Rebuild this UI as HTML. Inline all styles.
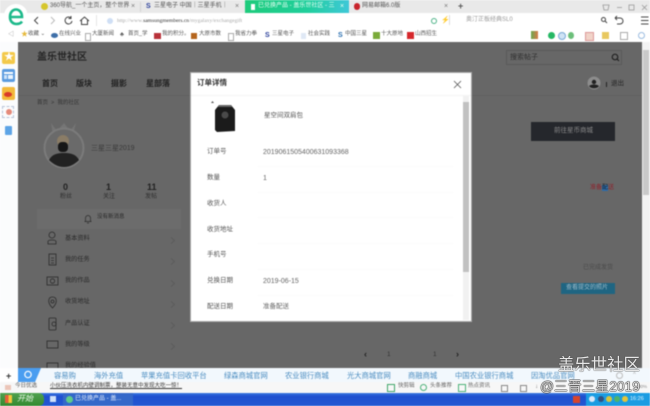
<!DOCTYPE html>
<html><head><meta charset="utf-8">
<style>
html,body{margin:0;padding:0;width:650px;height:406px;overflow:hidden;background:#fff}
body{font-family:"Liberation Sans","Noto Sans CJK SC",sans-serif}
#w{position:absolute;left:0;top:0;width:650px;height:406px;overflow:hidden;filter:blur(.4px)}
.a{position:absolute;white-space:nowrap;line-height:1}
.b{position:absolute}
.dk{color:#222}
.row{position:absolute;left:65px;font-size:6.200px;color:#2a2a2a;line-height:1;white-space:nowrap}
.arr{position:absolute;left:169px;width:4px;height:4px;border-top:1px solid #5c5c5c;border-right:1px solid #5c5c5c;transform:rotate(45deg)}
.ml{position:absolute;left:207px;font-size:6.500px;color:#555;line-height:1;white-space:nowrap}
.mv{position:absolute;left:263px;font-size:6.500px;color:#666;line-height:1;white-space:nowrap}
.ln{position:absolute;left:258px;width:195px;height:1px;background:#fbfbfb}
.lk{position:absolute;top:371.500px;font-size:7.300px;color:#4a8cc0;line-height:1;white-space:nowrap}
.bm{position:absolute;top:32px;font-size:5.500px;color:#555;line-height:1;white-space:nowrap}
</style></head><body><div id="w">

<!-- tab bar -->
<div class="b" style="left:0;top:0;width:650px;height:13px;background:#e9e9e9"></div>
<div class="b" style="left:41px;top:3px;width:7px;height:7px;border-radius:50%;background:#d6c62c"></div>
<div class="a" style="left:50px;top:3px;font-size:6px;color:#555">360导航_一个主页，整个世界</div>
<div class="a" style="left:131px;top:3px;font-size:7px;color:#777">×</div>
<div class="b" style="left:140px;top:2px;width:1px;height:10px;background:#d4d4d4"></div>
<div class="a" style="left:146px;top:3px;font-size:7px;font-weight:bold;color:#2a3f9a">S</div>
<div class="a" style="left:154px;top:3px;font-size:6px;color:#555">三星电子 中国｜三星手机｜</div>
<div class="a" style="left:235px;top:3px;font-size:7px;color:#777">×</div>
<div class="b" style="left:245px;top:0;width:104px;height:13px;background:linear-gradient(90deg,#1ecb7b,#20cf9c 60%,#3fc8d8)"></div>
<div class="b" style="left:251px;top:4px;width:4px;height:6px;background:#fff"></div>
<div class="a" style="left:258px;top:3px;font-size:6px;color:#e8fff4">已兑换产品 - 盖乐世社区 - 三</div>
<div class="a" style="left:340px;top:3px;font-size:7px;color:#e8fff4">×</div>
<div class="b" style="left:354px;top:3px;width:6px;height:7px;border-radius:3px;background:#c8242c"></div>
<div class="a" style="left:362px;top:3px;font-size:6px;color:#555">网易邮箱6.0版</div>
<div class="a" style="left:444px;top:3px;font-size:7px;color:#777">×</div>
<div class="a" style="left:458px;top:2px;font-size:9px;font-weight:bold;color:#555">+</div>
<svg class="b" style="left:600px;top:2px" width="50" height="10" fill="none" stroke="#999" stroke-width=".8">
<path d="M3 3h6l-1 5H4z"/><path d="M17 5.500h5"/><rect x="29" y="3" width="5" height="5"/><path d="M42 3l5 5M47 3l-5 5"/></svg>

<!-- address bar -->
<div class="b" style="left:0;top:13px;width:650px;height:15px;background:#fff"></div>
<svg class="b" style="left:4px;top:3px" width="23" height="26"><circle cx="12" cy="13" r="12" fill="#fff"/><path d="M6 14h12c0-5-3-7.500-6-7.500S6 9 6 14c0 4.500 3 7 6.500 7 2.500 0 4.500-1 5.500-2.500" fill="none" stroke="#1cb98a" stroke-width="2.600"/></svg>
<svg class="b" style="left:32px;top:14px" width="65" height="13" fill="none" stroke="#444" stroke-width="1">
<path d="M6 3L2.500 6.500 6 10"/><path d="M19 3l3.500 3.500L19 10" stroke="#bbb"/>
<path d="M39 4a3.500 3.500 0 1 0 1 3M39 2v2.500h-2.500"/><path d="M48 7l4.500-4 4.500 4M49.500 6v4.500h6V6"/></svg>
<div class="b" style="left:96px;top:15px;width:1px;height:11px;background:#e5e5e5"></div>
<div class="b" style="left:107px;top:18px;width:6px;height:6px;border-radius:50%;background:#cfdff5"></div>
<div class="a" style="left:117px;top:18px;font:5.500px 'Liberation Serif',serif;color:#aaa">http://www.<span style="color:#333">samsungmembers.cn</span>/mygalaxy/exchangegift</div>
<div class="b" style="left:431px;top:18px;width:4px;height:4px;border-radius:50%;border:1.500px solid #4cb287"></div>
<div class="a" style="left:441px;top:17px;font-size:7px;color:#3fb05c">⚡</div>
<div class="b" style="left:449px;top:15px;width:1px;height:10px;background:#ddd"></div>
<div class="a" style="left:466px;top:17px;font-size:6px;color:#999">奥汀正板经典SL0</div>
<svg class="b" style="left:600px;top:14px" width="50" height="13" fill="none" stroke="#444" stroke-width="1">
<circle cx="3.500" cy="5.500" r="2"/><path d="M5 7l2 2"/><path d="M15 4h5a3 3 0 0 1 0 6h-3M15 4l2-2M15 4l2 2"/><path d="M41 3h7.500M41 6.500h7.500M41 10h7.500" stroke-width="1.100"/></svg>

<!-- bookmarks -->
<div class="b" style="left:0;top:28px;width:650px;height:14px;background:#fff"></div>
<div class="a" style="left:8px;top:32px;font-size:6px;color:#888">◁</div>
<div class="a" style="left:21px;top:31px;font-size:7px;color:#e6b93a">★</div>
<div class="bm" style="left:28px">收藏 ⌄</div>
<div class="b" style="left:51px;top:33px;width:7px;height:5px;border-radius:50%;background:#3e6fa8"></div>
<div class="bm" style="left:59px">在线兴业</div>
<div class="b" style="left:85px;top:33px;width:4px;height:6px;border:.5px solid #aaa"></div>
<div class="bm" style="left:92px">大厦新闻</div>
<div class="a" style="left:120px;top:32px;font-size:6px;color:#555">♣</div>
<div class="bm" style="left:128px">首页_学</div>
<div class="b" style="left:154px;top:33px;width:7px;height:6px;background:#b8323a"></div>
<div class="bm" style="left:162px">我的积分。</div>
<div class="b" style="left:191px;top:33px;width:6px;height:6px;background:#b5651d"></div>
<div class="bm" style="left:199px">大原市数</div>
<div class="b" style="left:228px;top:33px;width:4px;height:6px;border:.5px solid #aaa"></div>
<div class="bm" style="left:235px">我省力拳</div>
<div class="a" style="left:265px;top:32px;font-size:7px;font-weight:bold;color:#2a3f9a">S</div>
<div class="bm" style="left:272px">三星电子</div>
<div class="b" style="left:301px;top:33px;width:5px;height:6px;background:#dfe8f5"></div>
<div class="bm" style="left:308px">社会实践</div>
<div class="a" style="left:338px;top:32px;font-size:7px;font-weight:bold;color:#2a6fb0">S</div>
<div class="bm" style="left:345px">中国三星</div>
<div class="b" style="left:373px;top:32px;width:7px;height:7px;background:#7bab3a"></div>
<div class="bm" style="left:381px">十大原地</div>
<div class="b" style="left:407px;top:32px;width:7px;height:7px;background:#d5282c"></div>
<div class="bm" style="left:415px">山西招生</div>
<div class="b" style="left:531px;top:31px;width:7px;height:8px;background:linear-gradient(90deg,#6aa84f,#d87a4a)"></div>
<div class="b" style="left:548px;top:32px;width:7px;height:7px;border-radius:50%;background:#25b864"></div>
<div class="b" style="left:558px;top:32px;width:6px;height:6px;border-radius:50%;background:#cfe3f5;border:.5px solid #7aa9d5"></div>
<div class="b" style="left:568px;top:32px;width:6px;height:7px;border-radius:50%;background:#6cbf7a"></div>
<div class="b" style="left:585px;top:32px;width:7px;height:7px;background:#f1d3c8;border:.5px solid #d99"></div>
<div class="b" style="left:602px;top:32px;width:7px;height:7px;background:#e8c860"></div>
<div class="b" style="left:620px;top:32px;width:6px;height:6px;border:.5px solid #aaa"></div>
<div class="b" style="left:638px;top:32px;width:5px;height:5px;border-radius:50%;border:1px solid #9bbce0"></div>

<!-- left sidebar -->
<div class="b" style="left:0;top:42px;width:18px;height:326px;background:#fbfcfd"></div>
<div class="b" style="left:2px;top:52px;width:13px;height:12px;border-radius:2px;background:#f3c94b"></div>
<div class="a" style="left:4px;top:53px;font-size:10px;color:#fff">★</div>
<div class="b" style="left:2px;top:69px;width:13px;height:13px;border-radius:2px;background:#5b9bdf"></div>
<div class="b" style="left:4px;top:72px;width:9px;height:2px;background:#fff"></div>
<div class="b" style="left:4px;top:75px;width:3px;height:4px;background:#cfe3f8"></div>
<div class="b" style="left:8px;top:75px;width:5px;height:4px;background:#e9f3fd"></div>
<div class="b" style="left:2px;top:87px;width:13px;height:13px;border-radius:2px;background:#f3b93a"></div>
<div class="b" style="left:4px;top:92px;width:8px;height:5px;border-radius:50%;background:#d93a2a"></div>
<div class="b" style="left:2px;top:106px;width:12px;height:12px;border:1px dashed #b8c4d8;box-sizing:border-box"></div>
<div class="b" style="left:6px;top:109px;width:6px;height:6px;border-radius:50%;background:#e58a7a"></div>
<div class="b" style="left:5px;top:126px;width:7px;height:9px;background:#5da4e6;border-radius:1px"></div>

<!-- dimmed page -->
<div class="b" style="left:18px;top:42px;width:624px;height:326px;background:#676767"></div>
<div class="b" style="left:642px;top:42px;width:8px;height:326px;background:#f3f3f3"></div>
<div class="b" style="left:643px;top:50px;width:6px;height:145px;background:#c9c9c9"></div>
<div class="a" style="left:37px;top:53px;font-size:10px;font-weight:bold;color:#252525">盖乐世社区</div>
<div class="b" style="left:506px;top:50px;width:116px;height:15px;border:1px solid #5a5a5a;box-sizing:border-box"></div>
<div class="a" style="left:510px;top:54px;font-size:7px;color:#2f2f2f">搜索帖子</div>
<svg class="b" style="left:611px;top:53px" width="9" height="9" fill="none" stroke="#222" stroke-width="1.200"><circle cx="4" cy="4" r="2.800"/><path d="M6 6l2 2"/></svg>
<div class="b" style="left:18px;top:95px;width:624px;height:1px;background:#616161"></div>
<div class="a dk" style="left:42px;top:80px;font-size:8px;font-weight:bold">首页</div>
<div class="a dk" style="left:76px;top:80px;font-size:8px;font-weight:bold">版块</div>
<div class="a dk" style="left:111px;top:80px;font-size:8px;font-weight:bold">摄影</div>
<div class="a dk" style="left:146px;top:80px;font-size:8px;font-weight:bold">星部落</div>
<div class="a" style="left:37px;top:101px;font-size:5.500px;color:#333">首页 &nbsp;&gt;&nbsp; 我的社区</div>

<!-- avatar -->
<svg class="b" style="left:43px;top:120px" width="42" height="50">
<path d="M8 3l6 8 7-8 6 8 6-8-3 12H10z" fill="#757575"/>
<circle cx="21" cy="28" r="19.500" fill="#6a6a6a" stroke="#7b7b7b" stroke-width="2"/>
<path d="M6 40c3-6 9-7 15-7s12 1 15 7c-4 4-9 7-15 7s-11-3-15-7z" fill="#222"/>
<circle cx="20" cy="21" r="6" fill="#8a7c66"/><rect x="15" y="22" width="10" height="10" rx="4" fill="#161616"/>
</svg>
<div class="a" style="left:91px;top:145px;font-size:7px;color:#3a3a3a">三星三星2019</div>
<div class="a" style="left:63px;top:183px;font-size:9px;font-weight:bold;color:#222">0</div>
<div class="a" style="left:106px;top:183px;font-size:9px;font-weight:bold;color:#222">1</div>
<div class="a" style="left:147px;top:183px;font-size:9px;font-weight:bold;color:#222">11</div>
<div class="a" style="left:60px;top:194px;font-size:6px;color:#2f2f2f">粉丝</div>
<div class="a" style="left:103px;top:194px;font-size:6px;color:#2f2f2f">关注</div>
<div class="a" style="left:145px;top:194px;font-size:6px;color:#2f2f2f">发帖</div>
<div class="b" style="left:37px;top:209px;width:144px;height:20px;background:#6c6c6c"></div>
<svg class="b" style="left:83px;top:213px" width="10" height="11" fill="none" stroke="#2a2a2a" stroke-width=".7"><path d="M1.500 8.500h7M2.500 8.500V5a2.500 2.500 0 0 1 5 0v3.500M4 10h2"/></svg>
<div class="a" style="left:97px;top:215px;font-size:5.500px;color:#2a2a2a">没有新消息</div>

<!-- menu -->
<svg class="b" style="left:46px;top:231px" width="16" height="146" fill="none" stroke="#2a2a2a" stroke-width=".8">
<circle cx="6" cy="4" r="3"/><path d="M2 13v-2.500c0-2 8-2 8 0V13z"/>
<rect x="3" y="23" width="7" height="11"/><path d="M5 27h3M5 29.500h3M5 32h3"/>
<rect x="1" y="46" width="11" height="8"/><circle cx="6.500" cy="50" r="2.200"/>
<path d="M6.500 77c-6-6-4-11 0-11s6 5 0 11z"/><circle cx="6.500" cy="70.500" r="1.500"/>
<rect x="3" y="87" width="7" height="12" rx="1"/><circle cx="8" cy="93" r="2"/>
<rect x="1" y="110" width="11" height="7"/>
<rect x="1" y="132" width="11" height="7"/>
</svg>
<div class="row" style="top:236px">基本资料</div>
<div class="row" style="top:257px">我的任务</div>
<div class="row" style="top:278px">我的作品</div>
<div class="row" style="top:299px">收货地址</div>
<div class="row" style="top:321px">产品认证</div>
<div class="row" style="top:342px">我的等级</div>
<div class="row" style="top:363px">我的经验值</div>
<div class="arr" style="top:238px"></div><div class="arr" style="top:259px"></div><div class="arr" style="top:281px"></div><div class="arr" style="top:302px"></div><div class="arr" style="top:323px"></div><div class="arr" style="top:344px"></div>

<!-- right page bits -->
<svg class="b" style="left:587px;top:76px" width="14" height="14"><circle cx="7" cy="7" r="6.500" fill="#8c8c8c"/><path d="M2 10c2-2 8-2 10 0-2 3-8 3-10 0z" fill="#222"/><circle cx="7" cy="6" r="2.200" fill="#222"/></svg>
<div class="b" style="left:606px;top:82px;width:1px;height:5px;background:#222"></div>
<div class="a" style="left:611px;top:81px;font-size:6.500px;color:#222">退出</div>
<div class="b" style="left:531px;top:122px;width:84px;height:19px;background:#25272c"></div>
<div class="a" style="left:554px;top:128px;font-size:6.500px;color:#8b8b8b">前往星币商城</div>
<div class="a" style="left:590px;top:185px;font-size:6px;color:#8f1f2a">准备<span style="background:#2f6ca8;color:#123">配</span>送</div>
<div class="a" style="left:583px;top:265px;font-size:6px;color:#4a4a4a">已完成发货</div>
<div class="b" style="left:561px;top:283px;width:54px;height:11px;background:#1f6582"></div>
<div class="a" style="left:566px;top:285px;font-size:6px;color:#9dbac8">查看提交的照片</div>

<!-- pagination -->
<div class="a" style="left:364px;top:350px;font-size:9px;font-weight:bold;color:#222">‹</div>
<div class="a" style="left:387px;top:352px;font-size:6.500px;color:#333">1</div>
<div class="a" style="left:433px;top:352px;font-size:6.500px;color:#333">1</div>
<div class="a" style="left:456px;top:350px;font-size:9px;font-weight:bold;color:#222">›</div>

<!-- modal -->
<div class="b" style="left:190px;top:72px;width:282px;height:250px;background:#a8a8a8"></div>
<div class="b" style="left:191px;top:73px;width:280px;height:248px;background:#fff"></div>
<div class="a" style="left:197px;top:79px;font-size:7.500px;color:#333;font-weight:bold">订单详情</div>
<svg class="b" style="left:453px;top:80px" width="9" height="10" stroke="#555" stroke-width=".8"><path d="M1 1l7 7M8 1L1 8"/></svg>
<div class="b" style="left:191px;top:95px;width:280px;height:1px;background:#f4f4f4"></div>
<div class="b" style="left:463px;top:96px;width:6px;height:224px;background:#f1f1f1"></div>
<div class="b" style="left:463px;top:102px;width:6px;height:170px;background:#c1c1c1"></div>
<svg class="b" style="left:207px;top:100px" width="30" height="34"><path d="M4 3l1.500-2L7 3z" fill="#555"/><path d="M12 5h12l4 5v21l-18 1-2-2V10z" fill="#1b1b1b"/><path d="M12 5h12l1 2H11z" fill="#666"/><circle cx="18" cy="15" r="3.500" fill="#4a4a4a"/></svg>
<div class="a" style="left:264px;top:113px;font-size:6.500px;color:#555">星空间双肩包</div>
<div class="ml" style="top:149px">订单号</div><div class="mv" style="top:149px;font-size:7px">2019061505400631093368</div>
<div class="ln" style="top:166px"></div>
<div class="ml" style="top:175px">数量</div><div class="mv" style="top:175px;font-size:7px">1</div>
<div class="ln" style="top:192px"></div>
<div class="ml" style="top:201px">收货人</div>
<div class="ln" style="top:217px"></div>
<div class="ml" style="top:227px">收货地址</div>
<div class="ln" style="top:243px"></div>
<div class="ml" style="top:252px">手机号</div>
<div class="ln" style="top:269px"></div>
<div class="ml" style="top:278px">兑换日期</div><div class="mv" style="top:278px;font-size:7px">2019-06-15</div>
<div class="ln" style="top:295px"></div>
<div class="ml" style="top:304px">配送日期</div><div class="mv" style="top:304px">准备配送</div>

<!-- link bar -->
<div class="b" style="left:0;top:368px;width:650px;height:14px;background:#f2f8fd"></div>
<div class="b" style="left:0;top:368px;width:18px;height:14px;background:#fff"></div>
<div class="a" style="left:6px;top:372px;font-size:9px;font-weight:bold;color:#333">+</div>
<svg class="b" style="left:18px;top:368px" width="24" height="14"><path d="M0 0h23l-6 14H0z" fill="#4a9df0"/><circle cx="10" cy="6.500" r="3.200" fill="none" stroke="#fff" stroke-width="1.200"/></svg>
<div class="lk" style="left:54px">容易购</div>
<div class="lk" style="left:94px">海外充值</div>
<div class="lk" style="left:141px">苹果充值卡回收平台</div>
<div class="lk" style="left:224px">绿森商城官网</div>
<div class="lk" style="left:285px">农业银行商城</div>
<div class="lk" style="left:347px">光大商城官网</div>
<div class="lk" style="left:408px">商融商城</div>
<div class="lk" style="left:455px">中国农业银行商城</div>
<div class="lk" style="left:531px">因淘优品官网</div>
<div class="b" style="left:616px;top:372px;width:5px;height:5px;border-radius:50%;border:.6px solid #bbb"></div>
<div class="a" style="left:633px;top:372px;font-size:6px;color:#aaa">^</div>

<!-- news bar -->
<div class="b" style="left:0;top:382px;width:650px;height:11px;background:#f7f7f7"></div>
<div class="b" style="left:5px;top:385px;width:6px;height:5px;background:#ecc5b8"></div>
<div class="a" style="left:15px;top:384px;font-size:5.500px;color:#555">今日优选</div>
<div class="a" style="left:50px;top:384px;font-size:5.500px;color:#333;text-decoration:underline">小伙压洗衣机内壁调制票，整装无意中发现大吃一惊！</div>
<div class="b" style="left:387px;top:384px;width:6px;height:6px;border:.5px solid #3fa76a"></div>
<div class="a" style="left:398px;top:384px;font-size:5.500px;color:#666">快剪辑</div>
<div class="b" style="left:420px;top:384px;width:5px;height:5px;border:.7px solid #4cb27a;border-radius:50%"></div>
<div class="a" style="left:430px;top:384px;font-size:5.500px;color:#666">头条推荐</div>
<div class="b" style="left:458px;top:384px;width:6px;height:6px;border:.5px solid #4cb27a"></div>
<div class="a" style="left:468px;top:384px;font-size:5.500px;color:#666">热点资讯</div>
<div class="b" style="left:501px;top:385px;width:5px;height:5px;border:.5px solid #888"></div>
<div class="b" style="left:520px;top:385px;width:5px;height:5px;border:.5px solid #888"></div>
<div class="a" style="left:535px;top:384px;font-size:6px;color:#777">↓</div>
<div class="a" style="left:638px;top:385px;font-size:4.500px;color:#888">00%</div>

<!-- taskbar -->
<div class="b" style="left:0;top:393px;width:650px;height:13px;background:linear-gradient(#3a78e0,#1f50cf 25%,#2357d2)"></div>
<div class="b" style="left:0;top:393px;width:44px;height:13px;background:linear-gradient(#4fa14f,#34892f);border-radius:0 5px 5px 0"></div>
<div class="b" style="left:5px;top:395px;width:7px;height:8px;background:linear-gradient(90deg,#e5603a 50%,#f4c63c 50%)"></div>
<div class="a" style="left:17px;top:395px;font-size:8px;font-style:italic;color:#e7f5e4">开始</div>
<div class="b" style="left:50px;top:396px;width:6px;height:6px;background:#cfe0f8"></div>
<div class="b" style="left:63px;top:393px;width:70px;height:13px;background:#3468c9"></div>
<div class="b" style="left:66px;top:396px;width:7px;height:7px;border-radius:50%;background:#5ecb8a"></div>
<div class="a" style="left:75px;top:396px;font-size:6px;color:#e4ecfa">已兑换产品 - 盖...</div>
<div class="b" style="left:586px;top:393px;width:64px;height:13px;background:#1a9ce2"></div>
<div class="b" style="left:573px;top:396px;width:7px;height:7px;background:#d8452c"></div>
<div class="b" style="left:589px;top:396px;width:6px;height:6px;border-radius:50%;background:#dbe8f8"></div>
<div class="b" style="left:598px;top:396px;width:6px;height:6px;border-radius:50%;background:#33507e"></div>
<div class="b" style="left:606px;top:396px;width:6px;height:6px;border-radius:50%;background:#d8c53a"></div>
<div class="b" style="left:614px;top:396px;width:6px;height:6px;border-radius:50%;background:#4fb36a"></div>
<div class="b" style="left:622px;top:396px;width:6px;height:6px;border-radius:50%;background:#e3c53a"></div>
<div class="a" style="left:630px;top:397px;font-size:5.500px;color:#e6f3fb">16:26</div>
</div>

<!-- watermark -->
<div class="a" style="left:558px;top:357px;font-size:16.400px;color:#e6e6e6;text-shadow:0 0 1px #444,0 0 1px #444">盖乐世社区</div>
<div class="a" style="left:540px;top:380px;font-size:13.800px;color:#d8d8d8;text-shadow:0 0 1px #222,0 0 1px #222,0 0 1px #222">@三晋三星2019</div>
</body></html>
